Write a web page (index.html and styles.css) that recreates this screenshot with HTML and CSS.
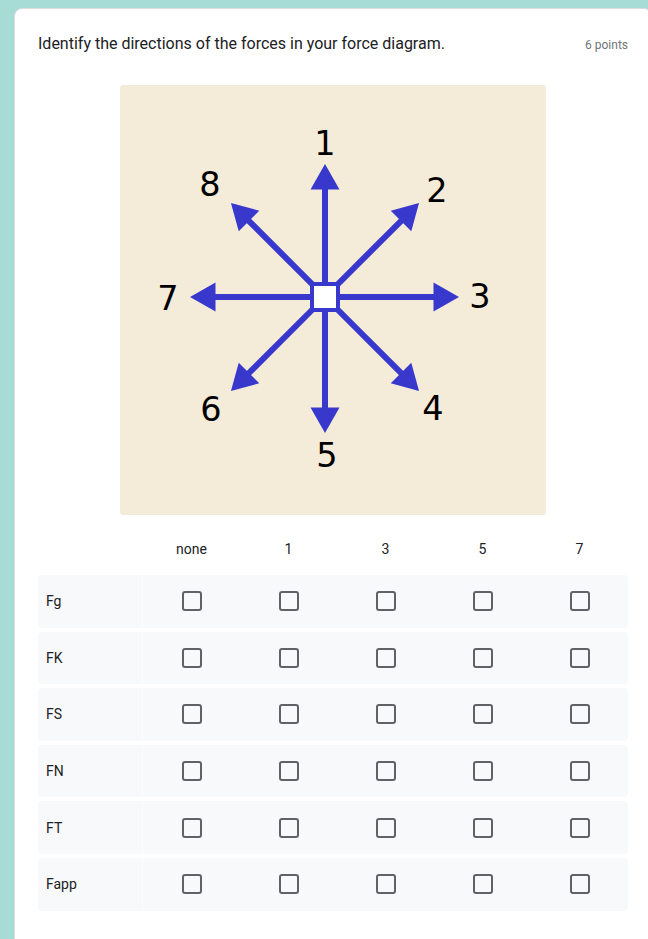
FILE: index.html
```html
<!DOCTYPE html>
<html lang="en">
<head>
<meta charset="utf-8">
<title>Force diagram question</title>
<link rel="stylesheet" href="styles.css">
</head>
<body>
<div class="card">
  <div class="question-head">
    <div class="question-title">Identify the directions of the forces in your force diagram.</div>
    <div class="points">6 points</div>
  </div>
  <div class="figure">
    <svg class="diagram" width="426" height="430" viewBox="0 0 426 430" xmlns="http://www.w3.org/2000/svg">
      <g fill="#3838cc" stroke="#3838cc">
        <g transform="rotate(0 205 212)"><line x1="205" y1="212" x2="205" y2="100" stroke-width="6"/><polygon stroke="none" points="205,79 190.5,104.5 219.5,104.5"/></g>
        <g transform="rotate(45 205 212)"><line x1="205" y1="212" x2="205" y2="100" stroke-width="6"/><polygon stroke="none" points="205,79 190.5,104.5 219.5,104.5"/></g>
        <g transform="rotate(90 205 212)"><line x1="205" y1="212" x2="205" y2="100" stroke-width="6"/><polygon stroke="none" points="205,78 190.5,103.5 219.5,103.5"/></g>
        <g transform="rotate(135 205 212)"><line x1="205" y1="212" x2="205" y2="100" stroke-width="6"/><polygon stroke="none" points="205,79 190.5,104.5 219.5,104.5"/></g>
        <g transform="rotate(180 205 212)"><line x1="205" y1="212" x2="205" y2="100" stroke-width="6"/><polygon stroke="none" points="205,76 190.5,101.5 219.5,101.5"/></g>
        <g transform="rotate(225 205 212)"><line x1="205" y1="212" x2="205" y2="100" stroke-width="6"/><polygon stroke="none" points="205,79 190.5,104.5 219.5,104.5"/></g>
        <g transform="rotate(270 205 212)"><line x1="205" y1="212" x2="205" y2="100" stroke-width="6"/><polygon stroke="none" points="205,77 190.5,102.5 219.5,102.5"/></g>
        <g transform="rotate(315 205 212)"><line x1="205" y1="212" x2="205" y2="100" stroke-width="6"/><polygon stroke="none" points="205,79 190.5,104.5 219.5,104.5"/></g>
      </g>
      <rect x="192" y="199" width="26" height="26" fill="#ffffff" stroke="#3838cc" stroke-width="4"/>
      <g class="labels" text-anchor="middle">
        <text x="205" y="70">1</text>
        <text x="317" y="117">2</text>
        <text x="360" y="223">3</text>
        <text x="313" y="335">4</text>
        <text x="207" y="382">5</text>
        <text x="91" y="336">6</text>
        <text x="48" y="225">7</text>
        <text x="90" y="111">8</text>
      </g>
    </svg>
  </div>
  <div class="grid">
    <div class="grid-header">
      <div class="label-cell"></div>
      <div class="col">none</div>
      <div class="col">1</div>
      <div class="col">3</div>
      <div class="col">5</div>
      <div class="col">7</div>
    </div>
    <div class="grid-row">
      <div class="label-cell">Fg</div>
      <div class="col"><span class="box"></span></div>
      <div class="col"><span class="box"></span></div>
      <div class="col"><span class="box"></span></div>
      <div class="col"><span class="box"></span></div>
      <div class="col"><span class="box"></span></div>
    </div>
    <div class="grid-row">
      <div class="label-cell">FK</div>
      <div class="col"><span class="box"></span></div>
      <div class="col"><span class="box"></span></div>
      <div class="col"><span class="box"></span></div>
      <div class="col"><span class="box"></span></div>
      <div class="col"><span class="box"></span></div>
    </div>
    <div class="grid-row">
      <div class="label-cell">FS</div>
      <div class="col"><span class="box"></span></div>
      <div class="col"><span class="box"></span></div>
      <div class="col"><span class="box"></span></div>
      <div class="col"><span class="box"></span></div>
      <div class="col"><span class="box"></span></div>
    </div>
    <div class="grid-row">
      <div class="label-cell">FN</div>
      <div class="col"><span class="box"></span></div>
      <div class="col"><span class="box"></span></div>
      <div class="col"><span class="box"></span></div>
      <div class="col"><span class="box"></span></div>
      <div class="col"><span class="box"></span></div>
    </div>
    <div class="grid-row">
      <div class="label-cell">FT</div>
      <div class="col"><span class="box"></span></div>
      <div class="col"><span class="box"></span></div>
      <div class="col"><span class="box"></span></div>
      <div class="col"><span class="box"></span></div>
      <div class="col"><span class="box"></span></div>
    </div>
    <div class="grid-row">
      <div class="label-cell">Fapp</div>
      <div class="col"><span class="box"></span></div>
      <div class="col"><span class="box"></span></div>
      <div class="col"><span class="box"></span></div>
      <div class="col"><span class="box"></span></div>
      <div class="col"><span class="box"></span></div>
    </div>
  </div>
</div>
</body>
</html>
```
FILE: styles.css
```css
* { box-sizing: border-box; }
html, body {
  margin: 0;
  padding: 0;
  height: 100%;
  overflow: hidden;
}
body {
  background: #a7dbd6;
  font-family: Roboto, "Liberation Sans", Arial, sans-serif;
  color: #202124;
  padding: 8px 0 0 14px;
}
.card {
  width: 638px;
  min-height: 960px;
  background: #ffffff;
  border-radius: 8px;
  border: 1px solid #dadce0;
  padding: 23px 23px 24px 23px;
}
.question-head {
  display: flex;
  align-items: baseline;
  justify-content: space-between;
}
.question-title {
  font-size: 16px;
  line-height: 24px;
}
.points {
  font-size: 12px;
  line-height: 16px;
  color: #70757a;
}
.figure {
  display: flex;
  justify-content: center;
  margin-top: 29px;
}
.diagram {
  display: block;
  background: #f4ecd8;
  border-radius: 3px;
}
.labels {
  font-family: "DejaVu Sans", sans-serif;
  font-size: 33.5px;
  fill: #000000;
}
.grid {
  margin-top: 12px;
  display: flex;
  flex-direction: column;
  gap: 4px;
}
.grid-header, .grid-row {
  display: grid;
  grid-template-columns: 105px repeat(5, 1fr);
  width: 590px;
}
.grid-header {
  height: 44px;
  font-size: 14px;
  line-height: 20px;
  align-items: center;
}
.grid-header .col {
  text-align: center;
  padding-top: 0;
}
.grid-row {
  height: 52.6px;
  background: #f8f9fa;
  border-radius: 4px;
  align-items: center;
  font-size: 14px;
  line-height: 20px;
}
.grid-row .label-cell {
  padding-left: 8px;
  height: 100%;
  display: flex;
  align-items: center;
  border-right: 1px solid rgba(255, 255, 255, 0.7);
}
.grid-row .col {
  display: flex;
  justify-content: center;
  align-items: center;
}
.box {
  display: block;
  width: 20px;
  height: 20px;
  border: 2px solid #5f6368;
  border-radius: 3px;
  margin-left: 1px;
}
```
